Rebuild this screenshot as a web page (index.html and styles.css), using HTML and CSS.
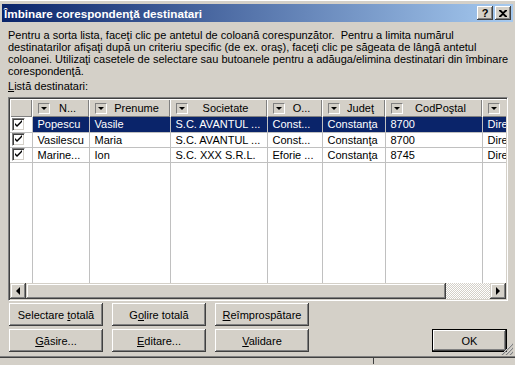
FILE: index.html
```html
<!DOCTYPE html>
<html lang="ro">
<head>
    <meta charset="UTF-8">
    <title>Îmbinare corespondenţă destinatari</title>
    <link rel="stylesheet" href="styles.css">
</head>
<body>
    <div class="window">
        <div class="titlebar">
            <span class="title">Îmbinare corespondenţă destinatari</span>
            <div class="tb-buttons">
                <span class="tb-btn">?</span>
                <span class="tb-btn">
                    <svg width="8" height="7" viewBox="0 0 8 7"><path d="M0 0h2l2 2 2-2h2v1L5 3.5 8 6v1H6L4 5 2 7H0V6l3-2.5L0 1z" fill="#000"/></svg>
                </span>
            </div>
        </div>

        <div class="content">
            <p class="intro">Pentru a sorta lista, faceţi clic pe antetul de coloană corespunzător.&nbsp; Pentru a limita numărul<br>destinatarilor afişaţi după un criteriu specific (de ex. oraş), faceţi clic pe săgeata de lângă antetul<br>coloanei. Utilizaţi casetele de selectare sau butoanele pentru a adăuga/elimina destinatari din îmbinare<br>corespondenţă.</p>
            <div class="label"><u>L</u>istă destinatari:</div>

            <div class="listbox">
                <div class="list-view">
                    <table class="grid">
                        <colgroup>
                            <col style="width:22px"><col style="width:57px"><col style="width:81px"><col style="width:97px">
                            <col style="width:55px"><col style="width:63px"><col style="width:97px"><col style="width:60px">
                        </colgroup>
                        <thead>
                            <tr>
                                <th></th>
                                <th><span class="hd"><span class="dd"></span><span class="hl">N...</span></span></th>
                                <th><span class="hd"><span class="dd"></span><span class="hl">Prenume</span></span></th>
                                <th><span class="hd"><span class="dd"></span><span class="hl">Societate</span></span></th>
                                <th><span class="hd"><span class="dd"></span><span class="hl">O...</span></span></th>
                                <th><span class="hd"><span class="dd"></span><span class="hl">Judeţ</span></span></th>
                                <th><span class="hd"><span class="dd"></span><span class="hl">CodPoştal</span></span></th>
                                <th><span class="hd"><span class="dd"></span></span></th>
                            </tr>
                        </thead>
                        <tbody>
                            <tr class="selected">
                                <td class="cb-cell"><span class="cb"></span></td>
                                <td>Popescu</td><td>Vasile</td><td>S.C. AVANTUL ...</td><td>Const...</td><td>Constanţa</td><td>8700</td><td>Dire</td>
                            </tr>
                            <tr>
                                <td class="cb-cell"><span class="cb"></span></td>
                                <td>Vasilescu</td><td>Maria</td><td>S.C. AVANTUL ...</td><td>Const...</td><td>Constanţa</td><td>8700</td><td>Dire</td>
                            </tr>
                            <tr>
                                <td class="cb-cell"><span class="cb"></span></td>
                                <td>Marine...</td><td>Ion</td><td>S.C. XXX S.R.L.</td><td>Eforie ...</td><td>Constanţa</td><td>8745</td><td>Dire</td>
                            </tr>
                            <tr class="filler">
                                <td></td><td></td><td></td><td></td><td></td><td></td><td></td><td></td>
                            </tr>
                        </tbody>
                    </table>
                </div>
                <div class="hscroll">
                    <span class="sb-btn"><span class="arrow-left"></span></span>
                    <span class="sb-thumb"></span>
                    <span class="sb-track"></span>
                    <span class="sb-btn"><span class="arrow-right"></span></span>
                </div>
            </div>

            <div class="actions">
                <div class="btn-grid">
                    <button class="btn">Selectare <u>t</u>otală</button>
                    <button class="btn">G<u>o</u>lire totală</button>
                    <button class="btn"><u>R</u>eîmprospătare</button>
                    <button class="btn"><u>G</u>ăsire...</button>
                    <button class="btn"><u>E</u>ditare...</button>
                    <button class="btn"><u>V</u>alidare</button>
                </div>
                <button class="btn btn-default">OK</button>
            </div>
        </div>

        <svg class="grip" width="12" height="12" viewBox="0 0 12 12">
            <path d="M11 1L1 11M11 5L5 11M11 9L9 11" stroke="#fff" stroke-width="1"/>
            <path d="M12 1L1 12M12 5L5 12M12 9L9 12" stroke="#808080" stroke-width="1.2"/>
        </svg>
    </div>
    <div class="behind">
        <span class="behind-line"></span>
    </div>
</body>
</html>
```

FILE: styles.css
```css
* {
    margin: 0;
    padding: 0;
    box-sizing: border-box;
}

body {
    width: 515px;
    height: 365px;
    overflow: hidden;
    background: #d4d0c8;
    font-family: "Liberation Sans", Arial, sans-serif;
    font-size: 11px;
    color: #000;
}

u {
    text-decoration: underline;
    text-underline-offset: 1px;
}

.window {
    position: relative;
    width: 515px;
    height: 358px;
    padding: 3px 2px 0 2px;
    background: #d4d0c8;
    border-top: 1px solid #fff;
    border-bottom: 1px solid #404040;
    box-shadow: inset 0 -1px #808080;
}

/* title bar */
.titlebar {
    height: 18px;
    display: flex;
    align-items: center;
    justify-content: space-between;
    padding: 0 2px 0 2px;
    background: linear-gradient(to right, #0a246a, #a6caf0);
}

.title {
    color: #fff;
    font-weight: bold;
    font-size: 11.7px;
}

.tb-buttons {
    display: flex;
    gap: 2px;
}

.tb-btn {
    width: 16px;
    height: 14px;
    display: flex;
    align-items: center;
    justify-content: center;
    background: #d4d0c8;
    font-weight: bold;
    font-size: 11px;
    box-shadow: inset -1px -1px #404040, inset 1px 1px #fff, inset -2px -2px #808080;
}

/* body */
.content {
    padding: 7px 5px 0 6px;
}

.intro {
    line-height: 12px;
    white-space: nowrap;
}

.label {
    margin-top: 3px;
    line-height: 12px;
}

.listbox {
    margin-top: 5px;
    width: 500px;
    height: 204px;
    border: 1px solid;
    border-color: #808080 #fff #fff #808080;
    box-shadow: inset 1px 1px #404040, inset -1px -1px #d4d0c8;
    padding: 1px;
    display: flex;
    flex-direction: column;
    background: #fff;
}

.list-view {
    flex: 1;
    overflow: hidden;
}

.grid {
    table-layout: fixed;
    width: 532px;
    border-collapse: collapse;
}

.grid th {
    height: 18px;
    padding: 0;
    background: #d4d0c8;
    font-weight: normal;
    box-shadow: inset 1px 1px #fff, inset -1px -1px #808080;
}

.hd {
    display: flex;
    align-items: center;
    padding: 0 4px 0 6px;
}

.dd {
    position: relative;
    flex: none;
    width: 12px;
    height: 11px;
    border: 1px solid;
    border-color: #808080 #fff #fff #808080;
    background: #d4d0c8;
}

.dd::after {
    content: "";
    position: absolute;
    left: 2px;
    top: 3px;
    border-left: 3px solid transparent;
    border-right: 3px solid transparent;
    border-top: 3px solid #000;
}

.hl {
    flex: 1;
    text-align: center;
    white-space: nowrap;
    overflow: hidden;
}

.grid td {
    height: 15px;
    padding: 0 0 0 5px;
    white-space: nowrap;
    overflow: hidden;
    border-right: 1px solid #c0c0c0;
    border-bottom: 1px solid #c0c0c0;
    line-height: 14px;
}

.grid td.cb-cell {
    padding-left: 2px;
    background: #fff;
}

.cb {
    display: block;
    width: 13px;
    height: 13px;
    border: 1px solid;
    border-color: #808080 #fff #fff #808080;
    box-shadow: inset 1px 1px #404040, inset -1px -1px #d4d0c8;
    background: #fff url("data:image/svg+xml;utf8,<svg xmlns='http://www.w3.org/2000/svg' width='11' height='11'><path d='M2 4v2l2 2 5-5V1L4 6z' fill='black'/></svg>") no-repeat 0 0;
}

.selected td {
    background: #0a246a;
    color: #fff;
}

.filler td {
    height: 122px;
    border-bottom: none;
}

/* horizontal scrollbar */
.hscroll {
    height: 16px;
    display: flex;
    flex: none;
}

.sb-btn,
.sb-thumb {
    background: #d4d0c8;
    box-shadow: inset -1px -1px #404040, inset 1px 1px #d4d0c8, inset -2px -2px #808080, inset 2px 2px #fff;
}

.sb-btn {
    width: 16px;
    display: flex;
    align-items: center;
    justify-content: center;
}

.sb-thumb {
    flex: 1;
}

.sb-track {
    width: 44px;
    background: conic-gradient(#fff 25%, #d4d0c8 0 50%, #fff 0 75%, #d4d0c8 0) 0 0 / 2px 2px;
}

.arrow-left {
    border-top: 4px solid transparent;
    border-bottom: 4px solid transparent;
    border-right: 4px solid #000;
}

.arrow-right {
    border-top: 4px solid transparent;
    border-bottom: 4px solid transparent;
    border-left: 4px solid #000;
}

/* buttons */
.actions {
    margin-top: 2px;
    display: flex;
    justify-content: space-between;
    align-items: flex-end;
    padding-left: 1px;
}

.btn-grid {
    display: grid;
    grid-template-columns: repeat(3, 94px);
    column-gap: 9px;
    row-gap: 3px;
}

.btn {
    height: 23px;
    border: none;
    background: #d4d0c8;
    font-family: inherit;
    font-size: 11px;
    color: #000;
    box-shadow: inset -1px -1px #404040, inset 1px 1px #fff, inset -2px -2px #808080, inset 2px 2px #d4d0c8;
}

.btn-default {
    width: 75px;
    margin-right: 1px;
    box-shadow: inset 0 0 0 1px #000, inset -2px -2px #404040, inset 2px 2px #fff, inset -3px -3px #808080;
}

.grip {
    position: absolute;
    right: 2px;
    bottom: 2px;
}

/* window behind the dialog */
.behind {
    height: 6px;
    position: relative;
}

.behind-line {
    position: absolute;
    left: 373px;
    top: 0;
    width: 1px;
    height: 6px;
    background: #404040;
}
```
